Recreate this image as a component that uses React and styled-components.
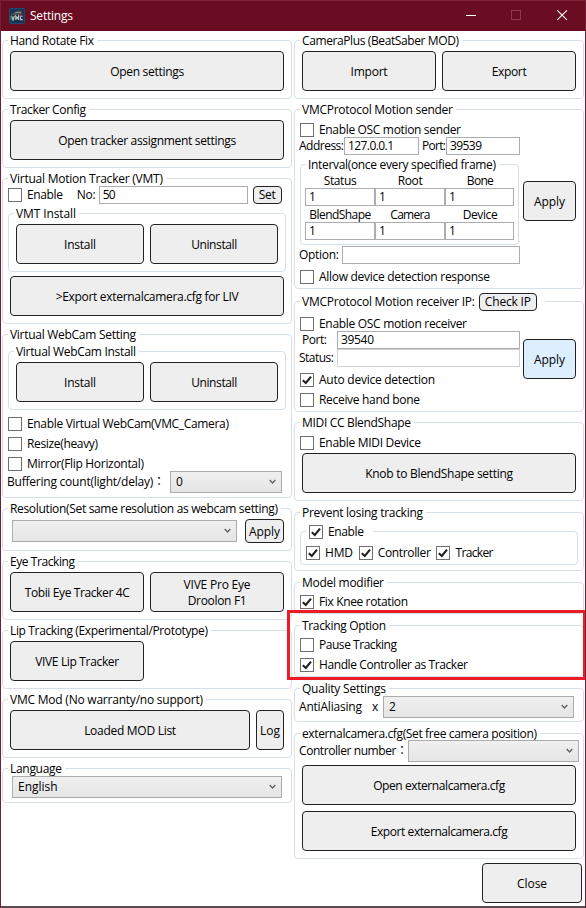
import React, { useLayoutEffect, useRef, useState } from "react";
import styled, { createGlobalStyle } from "styled-components";

const GlobalStyle = createGlobalStyle`
  *, *::before, *::after { box-sizing: border-box; }
  body { margin: 0; overflow: hidden; background: #fff; }
  body, button, input { font-family: "Open Sans", "Noto Sans", "Noto Sans CJK JP", sans-serif; font-size: 12px; line-height: 16px; color: #000; }
`;

const Window = styled.main`
  width: 586px; height: 908px; background: #fff; overflow: hidden;
  border: 1px solid #74203a; border-top-color: #7b2339; border-bottom: 0;
  display: flex; flex-direction: column;
`;
const TitleBar = styled.header`
  flex: none; height: 30px; background: #6a0d23; color: #fff;
  display: flex; align-items: center; padding-left: 8px; gap: 5px;
`;
const Caption = styled.div`
  margin-left: auto; display: flex;
  svg { display: block; width: 46px; height: 30px; }
`;
const Columns = styled.div`
  flex: none; display: flex; gap: 2px; padding: 9px 0 0 1px; height: 832px; position: relative;
`;
const Column = styled.div`
  width: 290px; display: flex; flex-direction: column;
`;
const Frame = styled.section`
  flex: none; position: relative;
  width: ${p => p.$w || 290}px; height: ${p => p.$h}px;
  margin: ${p => p.$m || "0 0 10px"};
  border: 1px solid #d5dfe5; border-radius: 4px;
  display: flex; flex-direction: column; align-items: flex-start;
`;
const Legend = styled.div`
  flex: none; height: 18px; margin: -9px 0 0 5px; padding: 0 3px 0 2px;
  background: #fff; display: flex; align-items: center;
`;
const Row = styled.div`
  flex: none; display: flex; align-items: center; gap: ${p => p.$gap ?? 0}px;
  height: ${p => p.$h}px; margin-top: ${p => p.$mt ?? 0}px; margin-left: ${p => p.$ml ?? 0}px;
`;
const ButtonRow = styled(Row).attrs({ $gap: 6, $ml: 7, $h: 40 })`
  margin-top: ${p => p.$top ?? 1}px;
`;
const Stack = styled.div`
  display: flex; flex-direction: column; align-items: flex-start; width: 221px;
  align-self: ${p => (p.$top ? "flex-start" : "center")};
`;
const Button = styled.button`
  flex: none; width: ${p => p.$w}px; height: ${p => p.$h || 40}px;
  padding: ${p => (p.$h === 18 ? 0 : 2)}px 0 0;
  margin-left: ${p => p.$ml ?? 0}px;
  border: 1px solid #222; border-radius: 4px; background: ${p => (p.$hot ? "#ddeeff" : "#eee")};
  display: flex; flex-direction: column; align-items: center; justify-content: center;
`;
const Field = styled.div`
  flex: none; width: ${p => p.$w}px; height: 18px; padding-left: 3px;
  border: 1px solid ${p => (p.$dim ? "#d0d1d6" : "#abadb3")}; background: #fff;
  display: flex; align-items: center;
`;
const Caps = styled.div`
  flex: none; width: ${p => p.$w}px; padding-left: ${p => p.$pl ?? 0}px; display: flex; justify-content: ${p => (p.$center ? "center" : "flex-start")};
`;
const SelectBox = styled.div`
  flex: none; width: ${p => p.$w}px; height: 22px; padding: 0 5px; border: 1px solid #acacac;
  background: linear-gradient(#f0f0f0, #e5e5e5);
  display: flex; align-items: center; justify-content: space-between;
`;
const Box = styled.span`
  flex: none; width: 14px; height: 14px; border: 1px solid #707070; background: #fff; display: block;
  svg { display: block; }
`;
const CheckLabel = styled.label`
  display: flex; align-items: center; gap: ${p => p.$gap ?? 5}px; height: 14px;
  margin-top: ${p => p.$mt ?? 0}px; margin-left: ${p => p.$ml ?? 5}px;
`;
const Glyphs = styled.span`
  display: block; white-space: pre; flex: none;
`;
const Highlight = styled.div`
  position: absolute; left: -8px; top: -16px; width: 299px; height: 70px;
  border: 3px solid #ed1c24; z-index: 2;
`;
const Footer = styled.footer`
  flex: none; display: flex; justify-content: flex-end; padding-right: 3px; height: 44px;
`;
const BottomEdge = styled.div`
  flex: none; height: 2px; background: #5d4a51; margin-top: -1px;
`;

/* Tracks a string so that it fills the given width. */
function Text({ w, children }) {
  const ref = useRef(null);
  const [spacing, setSpacing] = useState(0);
  useLayoutEffect(() => {
    if (!w || children.length < 2) return;
    const natural = ref.current.getBoundingClientRect().width;
    setSpacing((w - natural) / (children.length - 1));
  }, [w, children]);
  return <Glyphs ref={ref} style={{ letterSpacing: spacing }}>{children}</Glyphs>;
}

function Check({ on, label, w, mt, ml, gap }) {
  return (
    <CheckLabel $mt={mt} $ml={ml} $gap={gap}>
      <Box>
        {on && (
          <svg width="12" height="12" viewBox="0 0 12 12">
            <path d="M1.8 6.2 L4.8 9 L10 2.6" fill="none" stroke="#212121" strokeWidth="2.1" />
          </svg>
        )}
      </Box>
      <Text w={w}>{label}</Text>
    </CheckLabel>
  );
}

function Group({ title, tw, extra, children, ...rest }) {
  return (
    <Frame {...rest}>
      <Legend><Text w={tw}>{title}</Text>{extra}</Legend>
      {children}
    </Frame>
  );
}

function Select({ w, children }) {
  return (
    <SelectBox $w={w}>
      <Text>{children || ""}</Text>
      <svg width="7" height="6" viewBox="0 0 7 6"><path d="M.7 1 L3.5 4 L6.3 1" fill="none" stroke="#606060" strokeWidth="1.3" /></svg>
    </SelectBox>
  );
}

const AppIcon = () => (
  <svg width="16" height="16" viewBox="0 0 16 16">
    <rect x=".5" y=".5" width="15" height="15" rx="1" fill="#153552" stroke="#1e4a70" />
    <path d="M1.5 6 L6 4.2 L8 2.5 L13 2.8 L12.8 5 L14.2 6.6 L2.5 7.2Z" fill="#4c4a4c" />
    <path d="M6 4.5h6" stroke="#8b8c8e" />
    <path d="M2.5 7.8 L4 12 L5.5 7.8 M6.8 12V8L8.2 10.5L9.6 8V12 M13.7 8.3H11.5V11.6H13.8" fill="none" stroke="#c3c6c8" strokeWidth="1.1" />
    <path d="M2 8v4" stroke="#318f4d" /><path d="M10.5 7.7h2.5" stroke="#b43839" />
  </svg>
);

export default function App() {
  return (
    <>
      <GlobalStyle />
      <Window>
        <TitleBar>
          <AppIcon />
          <Text w={43}>Settings</Text>
          <Caption>
            <svg viewBox="0 0 46 30"><path d="M19 14.5h10" stroke="#fff" /></svg>
            <svg viewBox="0 0 46 30"><rect x="18.5" y="9.5" width="9" height="9" fill="none" stroke="#8a3a4e" /></svg>
            <svg viewBox="0 0 46 30"><path d="M18.3 9.3l9.6 9.6M27.9 9.3l-9.6 9.6" stroke="#fff" strokeWidth="1.1" /></svg>
          </Caption>
        </TitleBar>
        <Columns>
          <Column>
            <Group title="Hand Rotate Fix" tw={84} $h={59}>
              <ButtonRow><Button $w={274}><Text w={74}>Open settings</Text></Button></ButtonRow>
            </Group>
            <Group title="Tracker Config" tw={76} $h={59}>
              <ButtonRow><Button $w={274}><Text w={178}>Open tracker assignment settings</Text></Button></ButtonRow>
            </Group>
            <Group title="Virtual Motion Tracker (VMT)" tw={153} $h={146}>
              <Row $mt={-2} $h={18}>
                <Check label="Enable" w={36} />
                <Row $ml={14} $h={18}><Caps $w={22}><Text w={19}>No:</Text></Caps><Field $w={149}><Text w={13}>50</Text></Field></Row>
                <Button $w={29} $h={18} $ml={5}><Text w={17}>Set</Text></Button>
              </Row>
              <Group title="VMT Install" tw={60} $w={278} $h={59} $m="9px 0 0 5px">
                <ButtonRow><Button $w={128}><Text w={32}>Install</Text></Button><Button $w={128}><Text w={46}>Uninstall</Text></Button></ButtonRow>
              </Group>
              <ButtonRow $top={4}><Button $w={274}><Text w={183}>&gt;Export externalcamera.cfg for LIV</Text></Button></ButtonRow>
            </Group>
            <Group title="Virtual WebCam Setting" tw={126} $h={164}>
              <Group title="Virtual WebCam Install" tw={120} $w={278} $h={59} $m="7px 0 7px 5px">
                <ButtonRow><Button $w={128}><Text w={32}>Install</Text></Button><Button $w={128}><Text w={46}>Uninstall</Text></Button></ButtonRow>
              </Group>
              <Check label="Enable Virtual WebCam(VMC_Camera)" w={202} />
              <Check label="Resize(heavy)" w={71} mt={6} />
              <Check label="Mirror(Flip Horizontal)" w={117} mt={6} />
              <Row $h={22} $ml={4}>
                <Caps $w={163}><Text w={158}>Buffering count(light/delay)：</Text></Caps>
                <Select w={112}>0</Select>
              </Row>
            </Group>
            <Group title="Resolution(Set same resolution as webcam setting)" tw={268} $h={43}>
              <Row $ml={9} $h={24} $gap={8} $mt={1}>
                <Select w={225} />
                <Button $w={39} $h={24}><Text w={31}>Apply</Text></Button>
              </Row>
            </Group>
            <Group title="Eye Tracking" tw={65} $h={59}>
              <ButtonRow>
                <Button $w={134}><Text w={105}>Tobii Eye Tracker 4C</Text></Button>
                <Button $w={134}><Text w={67}>VIVE Pro Eye</Text><Text w={59}>Droolon F1</Text></Button>
              </ButtonRow>
            </Group>
            <Group title="Lip Tracking (Experimental/Prototype)" tw={198} $h={59}>
              <ButtonRow><Button $w={134}><Text w={84}>VIVE Lip Tracker</Text></Button></ButtonRow>
            </Group>
            <Group title="VMC Mod (No warranty/no support)" tw={193} $h={59}>
              <ButtonRow><Button $w={240}><Text w={92}>Loaded MOD List</Text></Button><Button $w={28}><Text w={20}>Log</Text></Button></ButtonRow>
            </Group>
            <Group title="Language" tw={52} $h={35}>
              <Row $ml={9} $h={22} $mt={-2}><Select w={270}>English</Select></Row>
            </Group>
          </Column>
          <Column>
            <Group title="CameraPlus (BeatSaber MOD)" tw={157} $h={59}>
              <ButtonRow><Button $w={134}><Text w={37}>Import</Text></Button><Button $w={134}><Text w={35}>Export</Text></Button></ButtonRow>
            </Group>
            <Group title="VMCProtocol Motion sender" tw={151} $h={180} $m="0 0 12px">
              <Check label="Enable OSC motion sender" w={142} mt={4} />
              <Row $h={127}>
                <Stack>
                  <Row $h={18} $ml={4}>
                    <Caps $w={45}><Text w={45}>Address:</Text></Caps><Field $w={75}><Text w={46}>127.0.0.1</Text></Field>
                    <Caps $w={27} $pl={3}><Text w={24}>Port:</Text></Caps><Field $w={74}><Text w={32}>39539</Text></Field>
                  </Row>
                  <Group title="Interval(once every specified frame)" tw={188} $w={219} $h={81} $m="9px 0 1px 5px">
                    <Row $ml={4} $h={14}>
                      <Caps $w={70} $center><Text w={33}>Status</Text></Caps><Caps $w={70} $center><Text w={25}>Root</Text></Caps><Caps $w={70} $center><Text w={27}>Bone</Text></Caps>
                    </Row>
                    <Row $ml={4} $h={18}>
                      <Field $w={70}>1</Field><Field $w={70}>1</Field><Field $w={69}>1</Field>
                    </Row>
                    <Row $ml={4} $h={18}>
                      <Caps $w={70} $center><Text w={62}>BlendShape</Text></Caps><Caps $w={70} $center><Text w={40}>Camera</Text></Caps><Caps $w={70} $center><Text w={35}>Device</Text></Caps>
                    </Row>
                    <Row $ml={4} $h={18} $mt={-2}>
                      <Field $w={70}>1</Field><Field $w={70}>1</Field><Field $w={69}>1</Field>
                    </Row>
                  </Group>
                  <Row $h={18} $ml={4}>
                    <Caps $w={43}><Text w={40}>Option:</Text></Caps><Field $w={178} />
                  </Row>
                </Stack>
                <Button $w={53} $ml={7}><Text w={31}>Apply</Text></Button>
              </Row>
              <Check label="Allow device detection response" w={171} mt={6} />
            </Group>
            <Group title="VMCProtocol Motion receiver IP:" tw={173} $h={111}
              extra={<><Button $w={58} $h={18} $ml={4}><Text w={46}>Check IP</Text></Button><Caps $w={5} /></>}>
              <Check label="Enable OSC motion receiver" w={148} mt={6} />
              <Row $h={42}>
                <Stack $top>
                  <Row $h={18} $ml={4}><Caps $w={38} $pl={3}><Text w={25}>Port:</Text></Caps><Field $w={183}><Text w={33}>39540</Text></Field></Row>
                  <Row $h={18} $ml={4}><Caps $w={38}><Text w={35}>Status:</Text></Caps><Field $w={183} $dim /></Row>
                </Stack>
                <Row $h={40} $mt={14}><Button $w={53} $ml={7} $hot><Text w={31}>Apply</Text></Button></Row>
              </Row>
              <Check on label="Auto device detection" w={116} />
              <Check label="Receive hand bone" w={101} mt={6} />
            </Group>
            <Group title="MIDI CC BlendShape" tw={109} $h={79} $m="0 0 11px">
              <Check label="Enable MIDI Device" w={102} mt={4} />
              <ButtonRow $top={3}><Button $w={274}><Text w={148}>Knob to BlendShape setting</Text></Button></ButtonRow>
            </Group>
            <Frame $h={59} $m="0 0 11px">
              <Legend><Text w={121}>Prevent losing tracking</Text></Legend>
              <Frame $w={278} $h={34} $m="9px 0 0 5px">
                <Legend><Check on label="Enable" w={36} ml={1} /><Caps $w={6} /></Legend>
                <Row $ml={5} $h={14} $mt={5} $gap={6}>
                  <Check on label="HMD" w={28} ml={0} />
                  <Check on label="Controller" w={53} ml={0} />
                  <Check on label="Tracker" w={38} ml={0} />
                </Row>
              </Frame>
            </Frame>
            <Group title="Model modifier" tw={82} $h={32} $m="0 0 11px">
              <Check on label="Fix Knee rotation" w={89} mt={3} />
            </Group>
            <Group title="Tracking Option" tw={84} $h={52} $m="0 0 11px">
              <Check label="Pause Tracking" w={78} mt={3} />
              <Check on label="Handle Controller as Tracker" w={149} mt={6} />
              <Highlight />
            </Group>
            <Group title="Quality Settings" tw={84} $h={34} $m="0 0 11px">
              <Row $h={22} $ml={4} $mt={-2}>
                <Caps $w={73}><Text w={63}>AntiAliasing</Text></Caps><Caps $w={11}>x</Caps>
                <Select w={191}>2</Select>
              </Row>
            </Group>
            <Group title="externalcamera.cfg(Set free camera position)" tw={235} $h={126}>
              <Row $h={22} $ml={4} $mt={-3}>
                <Caps $w={109}><Text w={109}>Controller number：</Text></Caps><Select w={171} />
              </Row>
              <ButtonRow $top={3}><Button $w={274}><Text w={132}>Open externalcamera.cfg</Text></Button></ButtonRow>
              <ButtonRow $top={6}><Button $w={274}><Text w={137}>Export externalcamera.cfg</Text></Button></ButtonRow>
            </Group>
          </Column>
        </Columns>
        <Footer><Button $w={100}><Text w={30}>Close</Text></Button></Footer>
        <BottomEdge />
      </Window>
    </>
  );
}
